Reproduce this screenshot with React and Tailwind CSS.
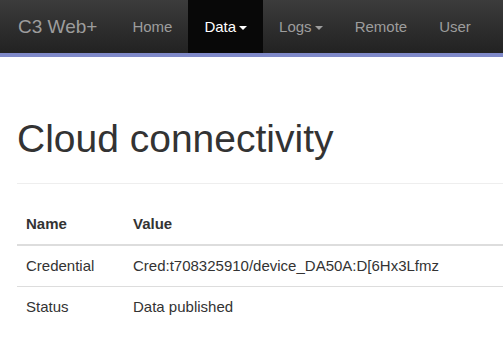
const links = [
  { label: "Home" },
  { label: "Data", caret: true, active: true },
  { label: "Logs", caret: true },
  { label: "Remote" },
  { label: "User" },
];

const rows = [
  { name: "Credential", value: "Cred:t708325910/device_DA50A:D[6Hx3Lfmz" },
  { name: "Status", value: "Data published" },
];

const Caret = ({ color }) => (
  <span
    className="inline-block ml-[3px] align-middle w-0 h-0 border-t-[4px] border-x-[4px] border-x-transparent"
    style={{ borderTopColor: color }}
  />
);

const App = () => {
  return (
    <div
      className="min-h-screen bg-white text-[#333] overflow-hidden"
      style={{ fontFamily: '"Liberation Sans", Arial, sans-serif' }}
    >
      {/* navbar */}
      <div className="h-[53px] flex items-stretch bg-gradient-to-b from-[#3c3c3c] to-[#222] border-b-[4px] border-[#7f89c9] box-content">
        <div className="pl-[18px] pr-[19px] pt-[2px] flex items-center text-[19px] text-[#9d9d9d]">
          C3 Web+
        </div>
        {links.map((l) => (
          <div
            key={l.label}
            className={
              l.active
                ? "px-[16px] pt-[2px] flex items-center text-[15px] text-white bg-[#080808]"
                : "px-[16px] pt-[2px] flex items-center text-[15px] text-[#9d9d9d]"
            }
          >
            {l.label}
            {l.caret && <Caret color={l.active ? "#fff" : "#9d9d9d"} />}
          </div>
        ))}
      </div>

      <div className="pl-[17px]">
        <h1 className="mt-[60px] text-[39px] leading-[44px] font-normal whitespace-nowrap">
          Cloud connectivity
        </h1>
        <div className="mt-[22px] h-px bg-[#eee]" />

        <table className="mt-[20px] w-full border-collapse text-[15px] leading-[22px]">
          <thead>
            <tr className="border-b-2 border-[#ddd]">
              <th className="w-[107px] px-[9px] py-[9px] text-left font-bold">Name</th>
              <th className="px-[9px] py-[9px] text-left font-bold">Value</th>
            </tr>
          </thead>
          <tbody>
            {rows.map((r, i) => (
              <tr key={r.name} className={i === 0 ? "border-b border-[#ddd]" : ""}>
                <td className="px-[9px] py-[9px] whitespace-nowrap">{r.name}</td>
                <td className="px-[9px] py-[9px] whitespace-nowrap">{r.value}</td>
              </tr>
            ))}
          </tbody>
        </table>
      </div>
    </div>
  );
};

export default App;
